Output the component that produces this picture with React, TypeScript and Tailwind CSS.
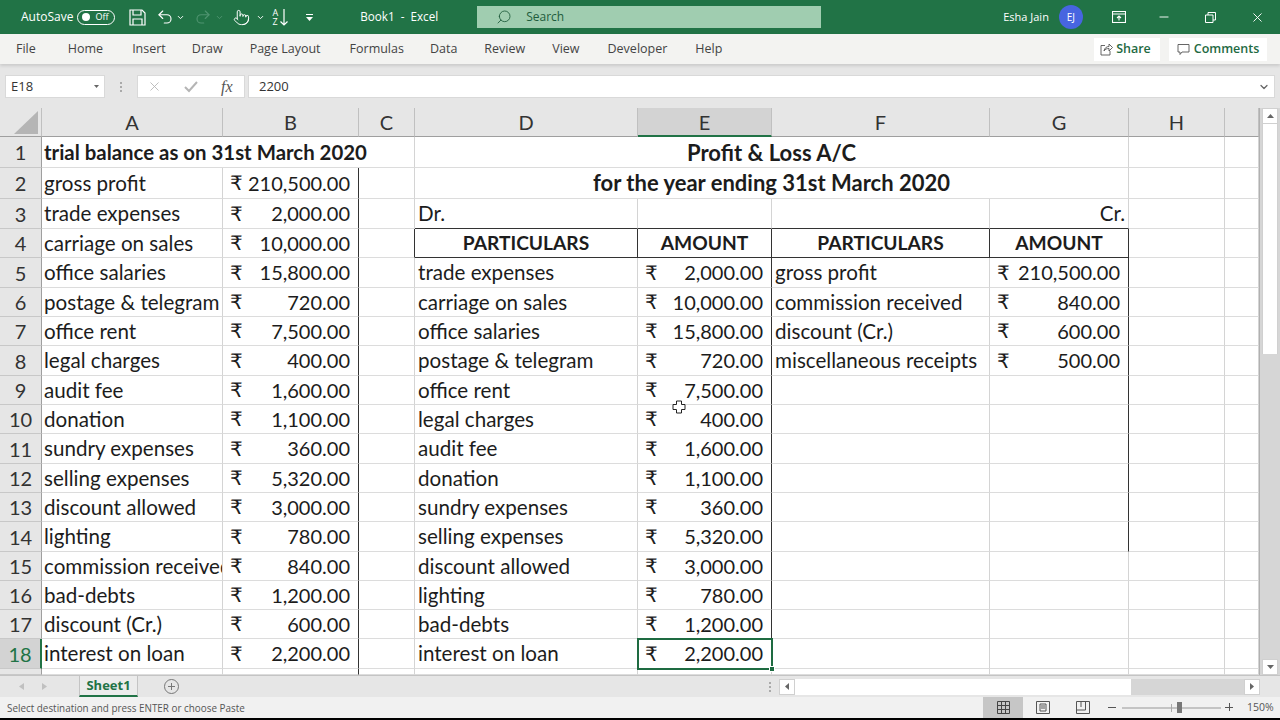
import type { ReactNode } from 'react';
import { ChevronDown, Minus, Pointer, Redo2, Search, Undo2, X } from 'lucide-react';

const ui = "font-['Open_Sans','Noto_Sans',sans-serif]";
const sheetFont = "font-['Lato','Noto_Sans',sans-serif]";

const tabs: [string, string][] = [
  ['File', 'ml-[16px]'],
  ['Home', 'ml-[32px]'],
  ['Insert', 'ml-[29px]'],
  ['Draw', 'ml-[26px]'],
  ['Page Layout', 'ml-[27px]'],
  ['Formulas', 'ml-[29px]'],
  ['Data', 'ml-[26px]'],
  ['Review', 'ml-[27px]'],
  ['View', 'ml-[27px]'],
  ['Developer', 'ml-[28px]'],
  ['Help', 'ml-[28px]'],
];

const trial: [string, string][] = [
  ['gross profit', '210,500.00'],
  ['trade expenses', '2,000.00'],
  ['carriage on sales', '10,000.00'],
  ['office salaries', '15,800.00'],
  ['postage & telegram', '720.00'],
  ['office rent', '7,500.00'],
  ['legal charges', '400.00'],
  ['audit fee', '1,600.00'],
  ['donation', '1,100.00'],
  ['sundry expenses', '360.00'],
  ['selling expenses', '5,320.00'],
  ['discount allowed', '3,000.00'],
  ['lighting', '780.00'],
  ['commission received', '840.00'],
  ['bad-debts', '1,200.00'],
  ['discount (Cr.)', '600.00'],
  ['interest on loan', '2,200.00'],
];

const drSide = trial.filter((r) => !['gross profit', 'commission received', 'discount (Cr.)'].includes(r[0]));

const crSide: [string, string][] = [
  ['gross profit', '210,500.00'],
  ['commission received', '840.00'],
  ['discount (Cr.)', '600.00'],
  ['miscellaneous receipts', '500.00'],
];

const grid = 'border-r border-b border-r-[#d4d4d4] border-b-[#dcdcdc]';

function Cell({ children, className = '' }: { children?: ReactNode; className?: string }) {
  return (
    <div className={`flex items-center overflow-hidden whitespace-nowrap px-[3px] text-[20.6px] leading-none text-[#1c1c1c] ${grid} ${className}`}>
      {children}
    </div>
  );
}

function Money({ value, className = '' }: { value?: string; className?: string }) {
  return (
    <Cell className={`justify-between pb-[1px] pl-[7px]! pr-[8px]! ${className}`}>
      <span className="pt-[1px] font-['DejaVu_Sans',sans-serif] text-[20px]">₹</span>
      <span className="text-[20px]">{value}</span>
    </Cell>
  );
}

function ColHead({ label, active = false }: { label?: string; active?: boolean }) {
  return (
    <div
      className={`flex items-center justify-center border-r border-b border-r-[#c0c0c0] text-[20px] text-[#333] ${active ? 'border-b-2 border-b-[#217346] bg-[#d3d3d3]' : 'border-b-[#9f9f9f] bg-[#e6e6e6]'}`}
    >
      {label}
    </div>
  );
}

function RowHead({ n, active = false }: { n?: number; active?: boolean }) {
  return (
    <div
      className={`flex items-center justify-center border-r border-b border-b-[#c8c8c8] text-[20px] ${active ? 'border-r-2 border-r-[#217346] bg-[#d3d3d3] text-[#217346]' : 'border-r-[#9f9f9f] bg-[#e6e6e6] text-[#333]'}`}
    >
      {n}
    </div>
  );
}

function TitleBar() {
  return (
    <div className={`flex h-[34px] items-center bg-[#217346] text-white ${ui}`}>
      <span className="ml-[21px] text-[12px]">AutoSave</span>
      <div className="ml-[4px] flex h-[15px] w-[38px] items-center rounded-full border border-white pl-[4px]">
        <span className="h-[8px] w-[8px] rounded-full bg-white" />
        <span className="ml-[5px] text-[9px]">Off</span>
      </div>
      <svg className="ml-[14px]" width="17" height="17" viewBox="0 0 17 17" fill="none" stroke="white" strokeWidth="1.2">
        <path d="M1 1h12l3 3v12H1z" />
        <path d="M4 1v5h8V1M4 16v-6h9v6" />
      </svg>
      <Undo2 className="ml-[10px]" size={18} strokeWidth={1.5} />
      <ChevronDown className="ml-[2px]" size={9} strokeWidth={2.5} />
      <Redo2 className="ml-[9px] text-[#4f9470]" size={18} strokeWidth={1.5} />
      <ChevronDown className="ml-[3px] text-[#4f9470]" size={9} strokeWidth={2.5} />
      <Pointer className="ml-[9px]" size={17} strokeWidth={1.4} />
      <ChevronDown className="ml-[6px]" size={9} strokeWidth={2.5} />
      <div className="ml-[7px] flex items-center">
        <span className="whitespace-pre-line text-[9px] leading-[9px]">{'A\nZ'}</span>
        <svg className="ml-[2px]" width="8" height="17" viewBox="0 0 8 17" fill="none" stroke="white" strokeWidth="1.2">
          <path d="M4 0v16M0.500 12.500L4 16l3.500-3.500" />
        </svg>
      </div>
      <svg className="ml-[17px]" width="9" height="9" viewBox="0 0 9 9" fill="white">
        <path d="M1 1h7v1H1zM1 4h7L4.500 8z" />
      </svg>
      <span className="ml-[46px] text-[11.7px]">Book1&nbsp; -&nbsp; Excel</span>
      <div className="ml-[39px] flex h-[22px] w-[344px] items-center bg-[#a0cdb0] pl-[19px] text-[#1f5c3c]">
        <Search className="-scale-x-100" size={16} strokeWidth={1.3} />
        <span className="ml-[14px] text-[12px]">Search</span>
      </div>
      <span className="ml-[182px] text-[11px]">Esha Jain</span>
      <span className="ml-[10px] flex h-[24px] w-[24px] items-center justify-center rounded-full bg-[#4765e0] text-[10px]">EJ</span>
      <svg className="ml-[29px]" width="14" height="12" viewBox="0 0 14 12" fill="none" stroke="white" strokeWidth="1.1">
        <rect x="0.500" y="0.500" width="13" height="11" />
        <path d="M0.500 3h13M7 9.500V5M5 7l2-2 2 2" />
      </svg>
      <Minus className="ml-[31px]" size={14} strokeWidth={1.6} />
      <svg className="ml-[34px]" width="11" height="11" viewBox="0 0 11 11" fill="none" stroke="white" strokeWidth="1">
        <path d="M0.500 3h7.500v7.500H0.500zM3 3V0.500h7.500V8H8" />
      </svg>
      <X className="ml-[34px]" size={15} strokeWidth={1.5} />
    </div>
  );
}

function RibbonTabs() {
  return (
    <div className={`relative z-10 flex h-[30px] items-center bg-[#f3f3f1] pt-[1px] text-[12.5px] text-[#444] shadow-[0_2px_3px_rgba(0,0,0,0.12)] ${ui}`}>
      {tabs.map(([t, gap]) => (
        <span key={t} className={`whitespace-nowrap ${gap}`}>{t}</span>
      ))}
      <div className="ml-auto flex items-center gap-[9px] pr-[13px] font-semibold text-[#1f6a43]">
        <div className="flex h-[23px] w-[66px] items-center justify-center gap-[3px] bg-white pr-[3px]">
          <svg width="13" height="13" viewBox="0 0 13 13" fill="none" stroke="#555" strokeWidth="0.9">
            <path d="M5 2.500H1v9.500h9V8M4 8c.5-3 2.500-4.500 5-4.500V1l3.500 3.500L9 8V5.500C7 5.500 5 6 4 8z" />
          </svg>
          Share
        </div>
        <div className="flex h-[23px] w-[98px] items-center justify-center gap-[4px] bg-white">
          <svg width="13" height="13" viewBox="0 0 13 13" fill="none" stroke="#555" strokeWidth="0.9">
            <path d="M1 1.500h11v7.500H5l-2 2.500V9H1z" />
          </svg>
          Comments
        </div>
      </div>
    </div>
  );
}

function FormulaBar() {
  return (
    <div className={`flex h-[44px] items-center bg-[#e6e6e6] pl-[5px] pr-[5px] pt-[1px] text-[13px] text-[#333] ${ui}`}>
      <div className="flex h-[23px] w-[100px] items-center justify-between border border-[#d9d9d9] bg-white px-[5px]">
        E18
        <svg width="5" height="3" viewBox="0 0 5 3" fill="#666"><path d="M0 0h5L2.500 3z" /></svg>
      </div>
      <div className="flex w-[32px] flex-col items-center gap-[2px]">
        <span className="h-[2px] w-[2px] bg-[#aaa]" />
        <span className="h-[2px] w-[2px] bg-[#aaa]" />
        <span className="h-[2px] w-[2px] bg-[#aaa]" />
      </div>
      <div className="flex h-[23px] w-[108px] items-center border border-[#d9d9d9] bg-white pl-[9px]">
        <X size={15} strokeWidth={1.4} className="text-[#b5b5b5]" />
        <svg className="ml-[22px]" width="14" height="12" viewBox="0 0 14 12" fill="none" stroke="#b5b5b5" strokeWidth="2">
          <path d="M1 6l4 4 8-9" />
        </svg>
        <span className="ml-[23px] font-['Liberation_Serif',serif] text-[16px] italic text-[#555]">fx</span>
      </div>
      <div className="ml-[3px] flex h-[23px] flex-1 items-center justify-between border border-[#d9d9d9] bg-white pl-[10px] pr-[4px]">
        2200
        <ChevronDown size={12} strokeWidth={2.5} className="text-[#666]" />
      </div>
    </div>
  );
}

function SheetGrid() {
  const cols = ['A', 'B', 'C', 'D', 'E', 'F', 'G', 'H'];
  const darkR = 'border-r-[#333]!';
  const darkB = 'border-b-[#333]!';
  const tblCell = `${darkR} ${darkB} justify-center text-[19.2px]! font-bold`;
  const title = 'col-span-4 justify-center text-[22px]! font-bold';
  return (
    <div
      className={`grid flex-1 grid-cols-[42px_181px_136px_56px_223px_134px_218px_139px_96px_34px] grid-rows-[29px_31px_31px_30px_29px_30px_29px_29px_30px_29px_29px_30px_29px_29px_30px_29px_29px_29px_30px_6px] overflow-hidden bg-white ${sheetFont}`}
    >
      {/* header row */}
      <div className="flex items-end justify-end border-r border-b border-r-[#c0c0c0] border-b-[#9f9f9f] bg-[#e6e6e6] pr-[3px] pb-[2px]">
        <svg width="24" height="23" viewBox="0 0 24 23" fill="#b5b5b5"><path d="M24 0v23H0z" /></svg>
      </div>
      {cols.map((c) => <ColHead key={c} label={c} active={c === 'E'} />)}
      <ColHead />

      {/* rows 1 and 2: titles */}
      <RowHead n={1} />
      <Cell className="col-span-3 pl-[2px]! pt-[1px] text-[20.4px]! font-bold">trial balance as on 31st March 2020</Cell>
      <Cell className={`${title} pt-[1px]`}>Profit &amp; Loss A/C</Cell>
      <Cell /><Cell />

      <RowHead n={2} />
      <Cell className="pl-[2px]!">{trial[0][0]}</Cell>
      <Money value={trial[0][1]} className={darkR} />
      <Cell />
      <Cell className={title}>for the year ending 31st March 2020</Cell>
      <Cell /><Cell />

      {/* row 3 */}
      <RowHead n={3} />
      <Cell className="pl-[2px]!">{trial[1][0]}</Cell>
      <Money value={trial[1][1]} className={darkR} />
      <Cell />
      <Cell className={darkB}>Dr.</Cell>
      <Cell className={darkB} />
      <Cell className={darkB} />
      <Cell className={`justify-end ${darkB}`}>Cr.</Cell>
      <Cell /><Cell />

      {/* row 4: table header */}
      <RowHead n={4} />
      <Cell className="pl-[2px]!">{trial[2][0]}</Cell>
      <Money value={trial[2][1]} className={darkR} />
      <Cell className={darkR} />
      <Cell className={tblCell}>PARTICULARS</Cell>
      <Cell className={tblCell}>AMOUNT</Cell>
      <Cell className={tblCell}>PARTICULARS</Cell>
      <Cell className={tblCell}>AMOUNT</Cell>
      <Cell /><Cell />

      {/* rows 5 to 18 */}
      {drSide.map((dr, i) => {
        const t = trial[i + 3];
        const cr = crSide[i];
        const last = i === drSide.length - 1;
        return [
          <RowHead key={`h${i}`} n={i + 5} active={last} />,
          <Cell key={`a${i}`} className="pl-[2px]!">{t[0]}</Cell>,
          <Money key={`b${i}`} value={t[1]} className={darkR} />,
          <Cell key={`c${i}`} />,
          <Cell key={`d${i}`}>{dr[0]}</Cell>,
          last ? (
            <div key={`e${i}`} className="relative">
              <Money value={dr[1]} className="h-full outline-2 -outline-offset-1 outline-[#1e6b41]" />
              <span className="absolute right-[-3px] bottom-[-3px] h-[6px] w-[6px] border border-white bg-[#1e6b41]" />
            </div>
          ) : (
            <Money key={`e${i}`} value={dr[1]} className={darkR} />
          ),
          <Cell key={`f${i}`}>{cr?.[0]}</Cell>,
          cr ? (
            <Money key={`g${i}`} value={cr[1]} className={darkR} />
          ) : (
            <Cell key={`g${i}`} className={i < 10 ? darkR : ''} />
          ),
          <Cell key={`i${i}`} />,
          <Cell key={`j${i}`} />,
        ];
      })}

      {/* row 19, cut off by the tab bar */}
      <RowHead />
      <Cell />
      <Cell className={darkR} />
      <Cell /><Cell /><Cell /><Cell /><Cell /><Cell /><Cell />
    </div>
  );
}

function VScroll() {
  return (
    <div className="flex w-[21px] flex-col border-l border-[#b0b0b0] bg-[#d6d6d6] pr-[2px] pl-[2px]">
      <div className="flex h-[16px] items-center justify-center border border-[#d0d0d0] bg-white">
        <svg width="7" height="4" viewBox="0 0 7 4" fill="#666"><path d="M0 4h7L3.500 0z" /></svg>
      </div>
      <div className="h-[230px] border-x border-[#d0d0d0] bg-white" />
      <div className="flex-1" />
      <div className="flex h-[16px] items-center justify-center border border-[#d0d0d0] bg-white">
        <svg width="7" height="4" viewBox="0 0 7 4" fill="#666"><path d="M0 0h7L3.500 4z" /></svg>
      </div>
    </div>
  );
}

function SheetTabs() {
  return (
    <div className={`flex h-[22px] items-center border-t border-[#c4c4c4] bg-[#e6e6e6] ${ui}`}>
      <svg className="ml-[19px]" width="5" height="7" viewBox="0 0 5 7" fill="#c0c0c0"><path d="M5 0v7L0 3.500z" /></svg>
      <svg className="ml-[18px]" width="5" height="7" viewBox="0 0 5 7" fill="#c0c0c0"><path d="M0 0v7l5-3.500z" /></svg>
      <div className="ml-[32px] flex h-full w-[59px] items-center justify-center border-x border-b-2 border-x-[#c4c4c4] border-b-[#217346] bg-[#ececec] text-[13px] font-bold text-[#217346]">
        Sheet1
      </div>
      <svg className="ml-[26px]" width="15" height="15" viewBox="0 0 15 15" fill="none" stroke="#777" strokeWidth="1">
        <circle cx="7.500" cy="7.500" r="7" />
        <path d="M7.500 4v7M4 7.500h7" />
      </svg>
      <div className="ml-[590px] flex flex-col gap-[2px]">
        <span className="h-[2px] w-[2px] bg-[#aaa]" />
        <span className="h-[2px] w-[2px] bg-[#aaa]" />
        <span className="h-[2px] w-[2px] bg-[#aaa]" />
      </div>
      <div className="ml-[8px] flex h-[16px] w-[481px] bg-[#d6d6d6]">
        <div className="flex w-[16px] items-center justify-center border border-[#d0d0d0] bg-white">
          <svg width="4" height="7" viewBox="0 0 4 7" fill="#666"><path d="M4 0v7L0 3.500z" /></svg>
        </div>
        <div className="w-[336px] bg-white" />
        <div className="flex-1" />
        <div className="flex w-[16px] items-center justify-center border border-[#d0d0d0] bg-white">
          <svg width="4" height="7" viewBox="0 0 4 7" fill="#666"><path d="M0 0v7l4-3.500z" /></svg>
        </div>
      </div>
    </div>
  );
}

function StatusBar() {
  return (
    <div className={`flex h-[21px] items-center bg-[#f1f1f1] text-[9.9px] text-[#555] ${ui}`}>
      <span className="ml-[7px] w-[976px] pt-[1px]">Select destination and press ENTER or choose Paste</span>
      <div className="flex h-full w-[40px] items-center justify-center bg-[#c6c6c6]">
        <svg width="13" height="13" viewBox="0 0 13 13" fill="none" stroke="#444" strokeWidth="1">
          <path d="M0.500 0.500h12v12h-12zM0.500 4.500h12M0.500 8.500h12M4.500 0.500v12M8.500 0.500v12" />
        </svg>
      </div>
      <div className="flex w-[40px] justify-center">
        <svg width="14" height="13" viewBox="0 0 14 13" fill="none" stroke="#555" strokeWidth="1">
          <path d="M0.500 0.500h13v12h-13zM4 3h6v7H4zM5 5h4M5 7h4" />
        </svg>
      </div>
      <div className="flex w-[40px] justify-center">
        <svg width="14" height="13" viewBox="0 0 14 13" fill="none" stroke="#555" strokeWidth="1">
          <path d="M0.500 0.500h13v12h-13zM0.500 9h9V0.500M5 0.500V6" />
        </svg>
      </div>
      <span className="ml-[5px] h-px w-[8px] bg-[#555]" />
      <div className="relative ml-[6px] h-[2px] w-[99px] bg-[#c4c4c4]">
        <span className="absolute top-[-3px] left-[49px] h-[8px] w-px bg-[#aaa]" />
        <span className="absolute top-[-5px] left-[55px] h-[11px] w-[5px] bg-[#777]" />
      </div>
      <span className="relative ml-[4px] h-px w-[8px] bg-[#555] after:absolute after:top-[-4px] after:left-[4px] after:h-[8px] after:w-px after:bg-[#555]" />
      <span className="ml-[14px] text-[10.5px]">150%</span>
    </div>
  );
}

export default function App() {
  return (
    <div className="relative flex h-[720px] w-[1280px] flex-col overflow-hidden bg-black">
      <TitleBar />
      <RibbonTabs />
      <FormulaBar />
      <div className="flex h-[567px] bg-[#e6e6e6]">
        <SheetGrid />
        <VScroll />
      </div>
      <SheetTabs />
      <StatusBar />
      {/* mouse pointer */}
      <svg className="absolute top-[400px] left-[672px]" width="14" height="14" viewBox="0 0 14 14" fill="white" stroke="#222" strokeWidth="1">
        <path d="M4.500 1h5v3.500H13v5H9.500V13h-5V9.500H1v-5h3.500z" />
      </svg>
    </div>
  );
}
